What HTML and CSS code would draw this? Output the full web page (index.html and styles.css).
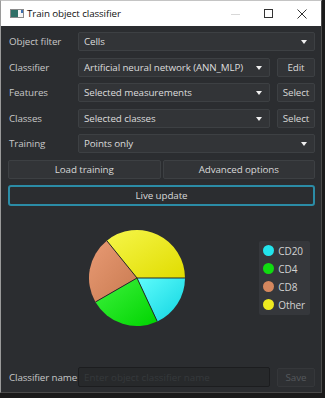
FILE: index.html
```html
<!DOCTYPE html>
<html lang="en">
<head>
    <meta charset="UTF-8">
    <meta name="viewport" content="width=device-width, initial-scale=1.0">
    <title>Train object classifier</title>
    <link rel="stylesheet" href="styles.css">
</head>
<body>
    <div class="window">
        <div class="titlebar">
            <svg class="app-icon" width="14" height="9" viewBox="0 0 14 9">
                <rect x="0.5" y="0.5" width="13" height="8" fill="#f4f4f4" stroke="#8a8a8a"/>
                <rect x="1" y="1" width="7" height="7" fill="#2f6f66"/>
                <rect x="11" y="1" width="2" height="3" fill="#3c6fb0"/>
            </svg>
            <span class="title">Train object classifier</span>
            <div class="controls">
                <svg width="10" height="10" viewBox="0 0 10 10"><line x1="0" y1="5.5" x2="9" y2="5.5" stroke="#d8d8d8"/></svg>
                <svg width="10" height="10" viewBox="0 0 10 10"><rect x="0.5" y="0.5" width="8" height="8" fill="none" stroke="#333"/></svg>
                <svg width="10" height="10" viewBox="0 0 10 10"><path d="M0.5 0.5 L9.5 9.5 M9.5 0.5 L0.5 9.5" stroke="#333" fill="none"/></svg>
            </div>
        </div>

        <div class="content">
            <div class="form-grid">
                <label>Object filter</label>
                <div class="combo wide">Cells</div>

                <label>Classifier</label>
                <div class="combo">Artificial neural network (ANN_MLP)</div>
                <button class="btn">Edit</button>

                <label>Features</label>
                <div class="combo">Selected measurements</div>
                <button class="btn">Select</button>

                <label>Classes</label>
                <div class="combo">Selected classes</div>
                <button class="btn">Select</button>

                <label>Training</label>
                <div class="combo wide">Points only</div>
            </div>

            <div class="btn-row">
                <button class="btn">Load training</button>
                <button class="btn">Advanced options</button>
            </div>

            <button class="btn live">Live update</button>

            <div class="chart">
                <svg class="pie" width="100" height="100" viewBox="0 0 100 100">
                    <defs>
                        <linearGradient id="g-cyan" x1="0" y1="0" x2="1" y2="1">
                            <stop offset="0" stop-color="#5ffcfc"/>
                            <stop offset="1" stop-color="#10d4e0"/>
                        </linearGradient>
                        <linearGradient id="g-green" x1="0" y1="0" x2="1" y2="1">
                            <stop offset="0" stop-color="#3ef23e"/>
                            <stop offset="1" stop-color="#00d400"/>
                        </linearGradient>
                        <linearGradient id="g-orange" x1="0" y1="0" x2="1" y2="1">
                            <stop offset="0" stop-color="#e89a74"/>
                            <stop offset="1" stop-color="#c87a50"/>
                        </linearGradient>
                        <linearGradient id="g-yellow" x1="0" y1="0" x2="1" y2="1">
                            <stop offset="0" stop-color="#f6f64a"/>
                            <stop offset="1" stop-color="#e0dc00"/>
                        </linearGradient>
                    </defs>
                    <path d="M50 50 L98 50 A48 48 0 0 1 70.3 93.5 Z" fill="url(#g-cyan)"/>
                    <path d="M50 50 L70.3 93.5 A48 48 0 0 1 8.4 74 Z" fill="url(#g-green)"/>
                    <path d="M50 50 L8.4 74 A48 48 0 0 1 19.8 12.7 Z" fill="url(#g-orange)"/>
                    <path d="M50 50 L19.8 12.7 A48 48 0 0 1 98 50 Z" fill="url(#g-yellow)"/>
                    <g stroke="#26282a" stroke-width="1">
                        <line x1="50" y1="50" x2="98" y2="50"/>
                        <line x1="50" y1="50" x2="70.3" y2="93.5"/>
                        <line x1="50" y1="50" x2="8.4" y2="74"/>
                        <line x1="50" y1="50" x2="19.8" y2="12.7"/>
                    </g>
                </svg>

                <div class="legend">
                    <div class="legend-item"><span class="dot cyan"></span>CD20</div>
                    <div class="legend-item"><span class="dot green"></span>CD4</div>
                    <div class="legend-item"><span class="dot orange"></span>CD8</div>
                    <div class="legend-item"><span class="dot yellow"></span>Other</div>
                </div>
            </div>

            <div class="name-row">
                <label>Classifier name</label>
                <input type="text" placeholder="Enter object classifier name">
                <button class="btn disabled">Save</button>
            </div>
        </div>
    </div>
</body>
</html>
```

FILE: styles.css
```css
html, body {
    margin: 0;
    padding: 0;
    background: #1a1a1a;
}

body {
    font-family: "Open Sans", "Noto Sans", sans-serif;
    font-size: 9.8px;
    letter-spacing: -0.1px;
}

.window {
    width: 320px;
    height: 391px;
    border: 1px solid #4a4a4a;
    border-top-color: #c4c4c4;
    border-left-color: #9a9a9a;
    background: #2b2d30;
    display: flex;
    flex-direction: column;
}

.titlebar {
    height: 25px;
    background: #ffffff;
    display: flex;
    align-items: center;
    padding-left: 9px;
}

.app-icon {
    margin-right: 3px;
}

.title {
    color: #111;
    font-size: 9.8px;
}

.controls {
    margin-left: auto;
    display: flex;
    align-items: center;
    gap: 23px;
    margin-right: 14px;
}

.content {
    flex: 1;
    display: flex;
    flex-direction: column;
    padding: 6px 6px 5px 7px;
}

.form-grid {
    display: grid;
    grid-template-columns: 63px 1fr 38px;
    grid-auto-rows: 19px;
    column-gap: 7px;
    row-gap: 6.5px;
    align-items: center;
}

.form-grid label, .name-row label {
    color: #c8c8c8;
    padding-left: 1px;
    white-space: nowrap;
}

.combo {
    height: 19px;
    box-sizing: border-box;
    background: #323437;
    border: 1px solid #3d4043;
    border-radius: 2px;
    color: #dcdcdc;
    padding-left: 5px;
    display: flex;
    align-items: center;
    position: relative;
}

.combo::after {
    content: "";
    position: absolute;
    right: 7px;
    top: 7px;
    border-left: 3px solid transparent;
    border-right: 3px solid transparent;
    border-top: 4px solid #f0f0f0;
}

.combo.wide {
    grid-column: 2 / 4;
}

.btn {
    height: 19px;
    box-sizing: border-box;
    background: #323437;
    border: 1px solid #3d4043;
    border-radius: 2px;
    color: #d8d8d8;
    font-family: inherit;
    font-size: 9.8px;
    letter-spacing: inherit;
    padding: 0;
}

.btn.disabled {
    color: #55585c;
    border-color: #35373a;
    background: #2e3033;
}

.btn-row {
    display: flex;
    gap: 2px;
    margin-top: 6.5px;
}

.btn-row .btn {
    flex: 1;
}

.live {
    margin-top: 6px;
    height: 21px;
    border: 2px solid #2b8ca6;
    border-radius: 3px;
    background: #2b2d30;
}

.chart {
    height: 144px;
    display: flex;
    align-items: center;
}

.pie {
    margin-left: 79px;
}

.legend {
    margin-left: auto;
    margin-right: 5px;
    background: #35373b;
    border-radius: 2px;
    padding: 4px 5px 4px 4px;
    display: flex;
    flex-direction: column;
    gap: 6px;
}

.legend-item {
    display: flex;
    align-items: center;
    color: #d2d2d2;
    font-size: 10px;
    height: 12px;
}

.dot {
    width: 11px;
    height: 11px;
    border-radius: 50%;
    margin-right: 4px;
}

.dot.cyan { background: #22e4ec; }
.dot.green { background: #10dc10; }
.dot.orange { background: #d4875e; }
.dot.yellow { background: #eeea20; }

.name-row {
    margin-top: auto;
    display: grid;
    grid-template-columns: 63px 1fr 38px;
    column-gap: 7px;
    align-items: center;
}

.name-row input {
    height: 20px;
    box-sizing: border-box;
    background: #27292b;
    border: 1px solid #1c1d1f;
    border-radius: 2px;
    color: #d8d8d8;
    font-family: inherit;
    font-size: 9.8px;
    padding-left: 5px;
}

.name-row input::placeholder {
    color: #36393c;
}
```
